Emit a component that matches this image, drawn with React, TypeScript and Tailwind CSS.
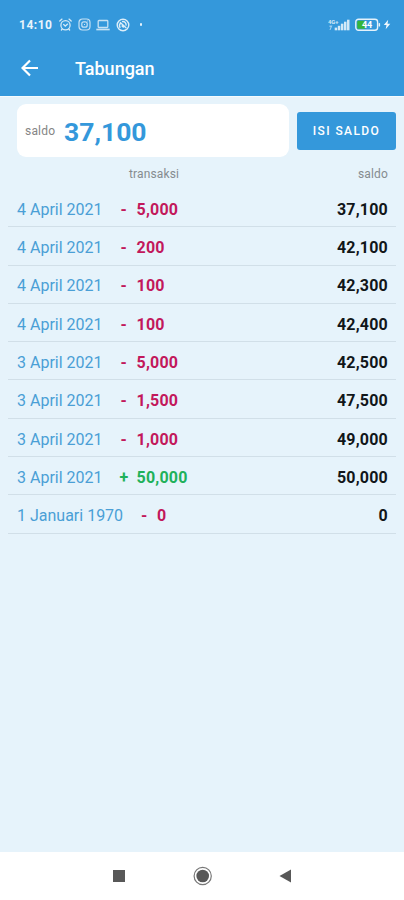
type Transaction = { date: string; sign: '-' | '+'; amount: string; balance: string };

const transactions: Transaction[] = [
  { date: '4 April 2021', sign: '-', amount: '5,000', balance: '37,100' },
  { date: '4 April 2021', sign: '-', amount: '200', balance: '42,100' },
  { date: '4 April 2021', sign: '-', amount: '100', balance: '42,300' },
  { date: '4 April 2021', sign: '-', amount: '100', balance: '42,400' },
  { date: '3 April 2021', sign: '-', amount: '5,000', balance: '42,500' },
  { date: '3 April 2021', sign: '-', amount: '1,500', balance: '47,500' },
  { date: '3 April 2021', sign: '-', amount: '1,000', balance: '49,000' },
  { date: '3 April 2021', sign: '+', amount: '50,000', balance: '50,000' },
  { date: '1 Januari 1970', sign: '-', amount: '0', balance: '0' },
];

function AlarmIcon() {
  return (
    <svg className="size-[13px]" viewBox="0 0 13 13" fill="none" stroke="#d3e9f7" strokeWidth="1.3" strokeLinecap="round">
      <circle cx="6.5" cy="7.2" r="4.6" />
      <path d="M.8 3 3 1.1M12.2 3 10 1.1M4.7 6.5l1.6 1.6 2.3-2M3.2 11l-.8 1M9.8 11l.8 1" />
    </svg>
  );
}

function CameraIcon() {
  return (
    <svg className="size-[13px]" viewBox="0 0 13 13" fill="none" stroke="#c6e1f4" strokeWidth="1.2">
      <rect x="1" y="1" width="11" height="11" rx="3.5" />
      <rect x="3.8" y="3.8" width="5.4" height="5.4" rx="2" />
      <path d="M6 6.5h1M9.3 3h.8" />
    </svg>
  );
}

function LaptopIcon() {
  return (
    <svg className="h-[12px] w-[14px]" viewBox="0 0 14 12" fill="none" stroke="#c6e1f4" strokeWidth="1.3">
      <rect x="2.2" y="1.5" width="9.6" height="7" rx=".8" />
      <path d="M.3 10.5h13.4" strokeWidth="1.7" />
    </svg>
  );
}

function BlockedIcon() {
  return (
    <svg className="size-[14px]" viewBox="0 0 14 14" fill="none" stroke="#dceef9" strokeWidth="1.4">
      <circle cx="7" cy="7" r="5.8" />
      <path d="M4 4.2 10.3 10M4.2 9.8c-1.2-2-.8-3.6.2-4.6M6 3.6c2.6-.6 4.6 1.5 4 4M5.7 7.4l2 2" />
    </svg>
  );
}

function SignalIcon() {
  return (
    <svg className="h-[14px] w-[22px]" viewBox="0 0 22 14" fill="#d3e9f7">
      <text x="0" y="5.5" fontFamily="Roboto, sans-serif" fontSize="5.8" fontWeight="700">4G+</text>
      <path d="M1.5 7.5h3l-2 4.5h-1l1-3h-1z" opacity=".65" />
      <rect x="6.7" y="9.6" width="2.5" height="2.7" />
      <rect x="9.8" y="7.8" width="2.5" height="4.5" />
      <rect x="12.9" y="5.7" width="2.5" height="6.6" />
      <rect x="16" y="3.7" width="2.5" height="8.6" />
      <rect x="19" y="1.7" width="2.5" height="10.6" />
    </svg>
  );
}

function BatteryIcon() {
  return (
    <svg className="h-[14px] w-[26px]" viewBox="0 0 26 14">
      <rect x=".8" y="1.3" width="21.8" height="10.9" rx="2.7" fill="none" stroke="#e4f2fb" strokeWidth="1.4" />
      <rect x="2.3" y="2.8" width="8.3" height="7.9" rx="1" fill="#34b53a" />
      <rect x="23.6" y="5" width="1.5" height="3.6" rx=".7" fill="#e4f2fb" />
      <text x="6.9" y="10" fontFamily="Roboto, sans-serif" fontSize="9" fontWeight="700" fill="#fff">44</text>
    </svg>
  );
}

function StatusBar() {
  return (
    <div className="flex h-[49px] items-center pl-[19px] pr-[13px] text-white">
      <span className="w-[40px] whitespace-nowrap text-[12px] font-bold tracking-[0.5px] text-[#e9f4fb]">14:10</span>
      <div className="flex items-center gap-[5.5px]">
        <AlarmIcon />
        <CameraIcon />
        <LaptopIcon />
        <BlockedIcon />
      </div>
      <span className="ml-[10px] size-[2.5px] rounded-full bg-[#e4f2fb]" />
      <div className="ml-auto flex items-center">
        <SignalIcon />
        <span className="w-[5px]" />
        <BatteryIcon />
        <svg className="ml-[2px] h-[11px] w-[8px]" viewBox="0 0 8 11" fill="#f0f8fd">
          <path d="M5.2.8.8 6.100h2.700L2.700 10.200 7.300 4.800H4.500z" />
        </svg>
      </div>
    </div>
  );
}

function TransactionRow({ date, sign, amount, balance }: Transaction) {
  const color = sign === '+' ? 'text-[#20b15a]' : 'text-[#c2185b]';
  const signSpacing = sign === '+' ? 'ml-[17px] w-[17px]' : 'ml-[18px] w-[16px]';
  return (
    <li className="flex h-[38.3px] items-center border-b-[1.5px] border-[#d1dfe8] pl-[9px] pr-[8px] pt-[4.5px] text-[16px] leading-none">
      <span className="text-[#4a9fd6]">{date}</span>
      <span className={`font-bold ${signSpacing} ${color}`}>{sign}</span>
      <span className={`font-bold tracking-[0.2px] ${color}`}>{amount}</span>
      <span className="ml-auto font-bold tracking-[0.2px] text-[#111619]">{balance}</span>
    </li>
  );
}

export default function App() {
  return (
    <div className="flex h-[900px] w-[404px] flex-col overflow-hidden bg-[#e6f3fb] font-[Roboto,sans-serif]">
      <header className="h-[96px] shrink-0 bg-[#3498db]">
        <StatusBar />
        <div className="flex h-[38px] items-center pl-[21px] text-white">
          <svg className="h-[18px] w-[18px]" viewBox="0 0 18 18" fill="none" stroke="currentColor" strokeWidth="2.2">
            <path d="M17 9H2M9 1.5 1.5 9 9 16.5" />
          </svg>
          <h1 className="ml-[36px] pt-px text-[18px] font-medium leading-none">Tabungan</h1>
        </div>
      </header>

      <main className="flex-1 border-t border-[#f5fbfe] px-[8px]">
        <section className="mt-[7px] flex items-center pl-[9px]">
          <div className="flex h-[53px] w-[272px] items-center rounded-[9px] bg-white pl-[8px]">
            <span className="w-[39px] pt-px text-[12px] tracking-[0.2px] text-[#858585]">saldo</span>
            <span className="pt-[4px] text-[26.5px] font-bold leading-none text-[#3498db]">37,100</span>
          </div>
          <button className="ml-[8px] h-[38px] w-[99px] rounded-[3px] bg-[#3498db] pt-px text-[12px] font-medium tracking-[1.4px] text-white">
            ISI SALDO
          </button>
        </section>
        <div className="flex h-[32px] items-center justify-between pl-[121px] pr-[8px] pt-[2px] text-[12px] tracking-[0.15px] text-[#858b8f]">
          <span>transaksi</span>
          <span>saldo</span>
        </div>
        <ul>
          {transactions.map((t, i) => (
            <TransactionRow key={i} {...t} />
          ))}
        </ul>
      </main>

      <nav className="h-[48px] shrink-0 bg-white">
        <svg className="h-[48px] w-[404px]" viewBox="0 0 404 48" fill="#585858">
          <rect x="113" y="18" width="12" height="12" />
          <circle cx="202.7" cy="24" r="6.3" />
          <circle cx="202.7" cy="24" r="8.6" fill="none" stroke="#777" strokeWidth="1.2" />
          <path d="M279.5 24 291 17.5v13z" />
        </svg>
      </nav>
    </div>
  );
}
